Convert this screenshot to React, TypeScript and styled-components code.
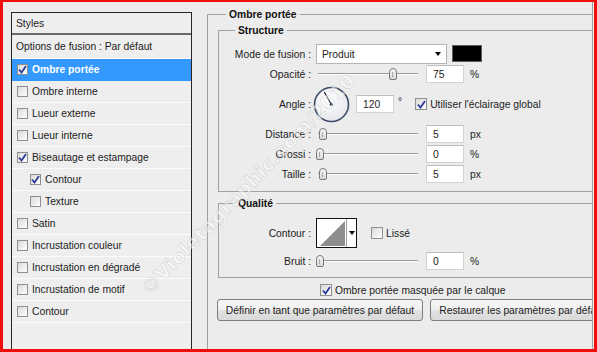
import styled, { createGlobalStyle } from 'styled-components';

const GlobalStyle = createGlobalStyle`
  html, body {
    margin: 0;
    padding: 0;
    background: #ffffff;
  }
  * {
    box-sizing: border-box;
  }
`;

const Frame = styled.div`
  position: relative;
  width: 597px;
  height: 352px;
  border: solid #f20c0c;
  border-width: 2px 3px 3px 3px;
  background: #ececec;
  display: flex;
  align-items: flex-start;
  overflow: hidden;
  font-family: "Liberation Sans", Arial, sans-serif;
  font-size: 10.3px;
  color: #1c1c1c;
`;

const LeftPane = styled.div`
  flex-shrink: 0;
  padding: 10px 0 0 8px;
`;

const StylesList = styled.div`
  width: 181px;
  height: 345px;
  border: 1px solid #262626;
  background: #eeeeee;
`;

const ListHeader = styled.div`
  height: 22px;
  display: flex;
  align-items: center;
  padding-left: 4px;
  border-bottom: 2px solid #6a6a6a;
`;

const BlendRow = styled.div`
  height: 24px;
  display: flex;
  align-items: center;
  padding-left: 4px;
  border-bottom: 1px solid #fbfbfb;
`;

const ListItem = styled.div<{ $selected?: boolean; $sub?: boolean }>`
  height: 22px;
  display: flex;
  align-items: center;
  gap: 4px;
  padding-left: ${(p) => (p.$sub ? 18 : 5)}px;
  border-bottom: 1px solid ${(p) => (p.$selected ? '#3399ff' : '#fbfbfb')};
  background: ${(p) => (p.$selected ? '#3399ff' : 'transparent')};
  color: ${(p) => (p.$selected ? '#ffffff' : '#1c1c1c')};
  font-weight: ${(p) => (p.$selected ? 'bold' : 'normal')};
`;

const Box = styled.span<{ $size?: number }>`
  flex-shrink: 0;
  width: ${(p) => p.$size ?? 12}px;
  height: ${(p) => p.$size ?? 12}px;
  border: 1px solid #8e8f8f;
  background: linear-gradient(135deg, #d9d9d9 0%, #f4f4f4 70%, #ffffff 100%);
  display: inline-flex;
  align-items: center;
  justify-content: center;
`;

const CheckBox = ({ checked, size }: { checked?: boolean; size?: number }) => (
  <Box $size={size}>
    {checked && (
      <svg width="9" height="9" viewBox="0 0 9 9">
        <path d="M1 4.5 L3.5 7.5 L8 1" fill="none" stroke="#2c3a9a" strokeWidth="1.8" />
      </svg>
    )}
  </Box>
);

const RightPane = styled.div`
  flex: 1;
  min-width: 0;
  height: 100%;
  margin-left: 15px;
  margin-right: 1px;
  padding-top: 6px;
  border-right: 1px solid #a0a0a0;
  overflow: hidden;
`;

const OuterGroup = styled.fieldset`
  width: 420px;
  height: 360px;
  min-width: 0;
  margin: 0;
  padding: 0 0 0 10px;
  border: 1px solid #a0a0a0;
`;

const GroupTitle = styled.legend<{ $indent: number }>`
  margin-left: ${(p) => p.$indent}px;
  padding: 0 3px;
  font-weight: bold;
  line-height: 13px;
  color: #111111;
`;

const InnerGroup = styled.fieldset<{ $top: number; $padTop: number; $padBottom: number }>`
  width: 400px;
  min-width: 0;
  margin: ${(p) => p.$top}px 0 0 0;
  padding: ${(p) => p.$padTop}px 0 ${(p) => p.$padBottom}px 0;
  border: 1px solid #a0a0a0;
`;

const Row = styled.div<{ $h?: number; $mt?: number }>`
  height: ${(p) => p.$h ?? 20}px;
  margin-top: ${(p) => p.$mt ?? 0}px;
  display: flex;
  align-items: center;
  gap: 5px;
`;

const Label = styled.span`
  width: 92px;
  flex-shrink: 0;
  text-align: right;
  white-space: nowrap;
`;

const Select = styled.div`
  width: 131px;
  height: 20px;
  background: #ffffff;
  border: 1px solid #b5b5b5;
  display: flex;
  align-items: center;
  justify-content: space-between;
  padding: 0 5px 0 5px;
`;

const Arrow = styled.span`
  width: 0;
  height: 0;
  border-left: 3.5px solid transparent;
  border-right: 3.5px solid transparent;
  border-top: 4px solid #000000;
`;

const Swatch = styled.span`
  width: 30px;
  height: 17px;
  background: #000000;
  border: 1px solid #5c5c5c;
  align-self: flex-start;
  margin-top: 1px;
`;

const SliderBox = styled.div`
  position: relative;
  width: 102px;
  height: 20px;
  margin-right: 3px;
  flex-shrink: 0;
`;

const Track = styled.div`
  position: absolute;
  left: 2px;
  right: 0;
  top: 9px;
  height: 2px;
  border-top: 1px solid #9a9a9a;
  border-bottom: 1px solid #fdfdfd;
`;

const Thumb = styled.div`
  position: absolute;
  top: 4px;
  width: 8px;
  height: 12px;
  margin-left: -4px;
  border: 1px solid #7b7b7b;
  border-radius: 4px 4px 2px 2px;
  background: linear-gradient(#f8f8f8, #d8d8d8);
  &::after {
    content: '';
    position: absolute;
    left: 2px;
    top: 3px;
    width: 1px;
    height: 5px;
    background: #a8a8a8;
  }
`;

const Slider = ({ pct }: { pct: number }) => (
  <SliderBox>
    <Track />
    <Thumb style={{ left: 4 + pct * 97 }} />
  </SliderBox>
);

const NumField = styled.span`
  width: 38px;
  height: 18px;
  background: #ffffff;
  border: 1px solid #d2d2d2;
  border-top-color: #bdbdbd;
  display: flex;
  align-items: center;
  padding-left: 6px;
  flex-shrink: 0;
`;

const Unit = styled.span`
  margin-left: 1px;
`;

const DialWrap = styled.span`
  margin: 0 1px 0 -3px;
  display: inline-flex;
`;

const Dial = ({ angle }: { angle: number }) => {
  const rad = (angle * Math.PI) / 180;
  const x2 = 18.5 + 14.5 * Math.cos(rad);
  const y2 = 18.5 - 14.5 * Math.sin(rad);
  return (
    <svg width="37" height="37" viewBox="0 0 37 37">
      <defs>
        <radialGradient id="dialFill" cx="40%" cy="35%" r="70%">
          <stop offset="0%" stopColor="#ffffff" />
          <stop offset="100%" stopColor="#e4e6ea" />
        </radialGradient>
      </defs>
      <circle cx="18.5" cy="18.5" r="17" fill="url(#dialFill)" stroke="#3f4c68" strokeWidth="1.6" />
      <line x1="18.5" y1="18.5" x2={x2} y2={y2} stroke="#111111" strokeWidth="1.2" />
      <circle cx="18.5" cy="18.5" r="1.6" fill="#111111" />
    </svg>
  );
};

const Degree = styled.span`
  margin: -6px 8px 0 -1px;
`;

const InlineCheck = styled.label`
  display: flex;
  align-items: center;
  gap: 3px;
  white-space: nowrap;
`;

const ContourPicker = styled.div`
  width: 41px;
  height: 30px;
  border: 1px solid #111111;
  background: #ffffff;
  display: flex;
  flex-shrink: 0;
`;

const ContourPreview = styled.div`
  width: 30px;
  height: 28px;
  border-right: 1px solid #9c9c9c;
`;

const ContourDrop = styled.div`
  flex: 1;
  display: flex;
  align-items: center;
  justify-content: center;
`;

const SmoothCheck = styled(InlineCheck)`
  margin-left: 9px;
`;

const MaskRow = styled.div`
  height: 14px;
  margin-top: 5px;
  padding-left: 102px;
  display: flex;
  align-items: center;
`;

const ButtonRow = styled.div`
  margin-top: 2px;
  margin-left: -1px;
  display: flex;
  gap: 7px;
`;

const Button = styled.button<{ $w: number }>`
  width: ${(p) => p.$w}px;
  height: 22px;
  flex-shrink: 0;
  padding: 0;
  border: 1px solid #7e7e7e;
  border-radius: 3px;
  background: linear-gradient(#f7f7f7 0%, #efefef 50%, #e2e2e2 51%, #dadada 100%);
  font: inherit;
  color: #1c1c1c;
  white-space: nowrap;
`;

const Watermark = styled.div`
  position: absolute;
  left: 245px;
  top: 182px;
  transform: translate(-50%, -50%) rotate(-46deg);
  font-family: "DejaVu Sans", sans-serif;
  font-size: 19px;
  font-weight: bold;
  letter-spacing: 0.5px;
  white-space: nowrap;
  color: rgba(255, 255, 255, 0.5);
  -webkit-text-stroke: 0.6px rgba(150, 150, 150, 0.35);
  pointer-events: none;
`;

type StyleItem = { label: string; checked?: boolean; selected?: boolean; sub?: boolean };

const items: StyleItem[] = [
  { label: 'Ombre portée', checked: true, selected: true },
  { label: 'Ombre interne' },
  { label: 'Lueur externe' },
  { label: 'Lueur interne' },
  { label: 'Biseautage et estampage', checked: true },
  { label: 'Contour', checked: true, sub: true },
  { label: 'Texture', sub: true },
  { label: 'Satin' },
  { label: 'Incrustation couleur' },
  { label: 'Incrustation en dégradé' },
  { label: 'Incrustation de motif' },
  { label: 'Contour' },
];

const App = () => (
  <Frame>
    <GlobalStyle />
    <LeftPane>
      <StylesList>
        <ListHeader>Styles</ListHeader>
        <BlendRow>Options de fusion : Par défaut</BlendRow>
        {items.map((it, i) => (
          <ListItem key={i} $selected={it.selected} $sub={it.sub}>
            <CheckBox checked={it.checked} size={11} />
            {it.label}
          </ListItem>
        ))}
      </StylesList>
    </LeftPane>

    <RightPane>
      <OuterGroup>
        <GroupTitle $indent={8}>Ombre portée</GroupTitle>

        <InnerGroup $top={3} $padTop={7} $padBottom={7}>
          <GroupTitle $indent={16}>Structure</GroupTitle>
          <Row>
            <Label>Mode de fusion :</Label>
            <Select>
              Produit
              <Arrow />
            </Select>
            <Swatch />
          </Row>
          <Row>
            <Label>Opacité :</Label>
            <Slider pct={0.75} />
            <NumField>75</NumField>
            <Unit>%</Unit>
          </Row>
          <Row $h={36} $mt={2}>
            <Label>Angle :</Label>
            <DialWrap>
              <Dial angle={120} />
            </DialWrap>
            <NumField>120</NumField>
            <Degree>°</Degree>
            <InlineCheck>
              <CheckBox checked />
              Utiliser l'éclairage global
            </InlineCheck>
          </Row>
          <Row $mt={2}>
            <Label>Distance :</Label>
            <Slider pct={0.03} />
            <NumField>5</NumField>
            <Unit>px</Unit>
          </Row>
          <Row>
            <Label>Grossi :</Label>
            <Slider pct={0} />
            <NumField>0</NumField>
            <Unit>%</Unit>
          </Row>
          <Row>
            <Label>Taille :</Label>
            <Slider pct={0.03} />
            <NumField>5</NumField>
            <Unit>px</Unit>
          </Row>
        </InnerGroup>

        <InnerGroup $top={5} $padTop={8} $padBottom={6}>
          <GroupTitle $indent={16}>Qualité</GroupTitle>
          <Row $h={30}>
            <Label>Contour :</Label>
            <ContourPicker>
              <ContourPreview>
                <svg width="29" height="28" viewBox="0 0 29 28">
                  <polygon points="3,27 28,2 28,27" fill="#8e8e8e" />
                </svg>
              </ContourPreview>
              <ContourDrop>
                <Arrow />
              </ContourDrop>
            </ContourPicker>
            <SmoothCheck>
              <CheckBox />
              Lissé
            </SmoothCheck>
          </Row>
          <Row $mt={3}>
            <Label>Bruit :</Label>
            <Slider pct={0} />
            <NumField>0</NumField>
            <Unit>%</Unit>
          </Row>
        </InnerGroup>

        <MaskRow>
          <InlineCheck>
            <CheckBox checked />
            Ombre portée masquée par le calque
          </InlineCheck>
        </MaskRow>

        <ButtonRow>
          <Button $w={206}>Définir en tant que paramètres par défaut</Button>
          <Button $w={184}>Restaurer les paramètres par défaut</Button>
        </ButtonRow>
      </OuterGroup>
    </RightPane>

    <Watermark>©Violetagraphic.com/2010</Watermark>
  </Frame>
);

export default App;
